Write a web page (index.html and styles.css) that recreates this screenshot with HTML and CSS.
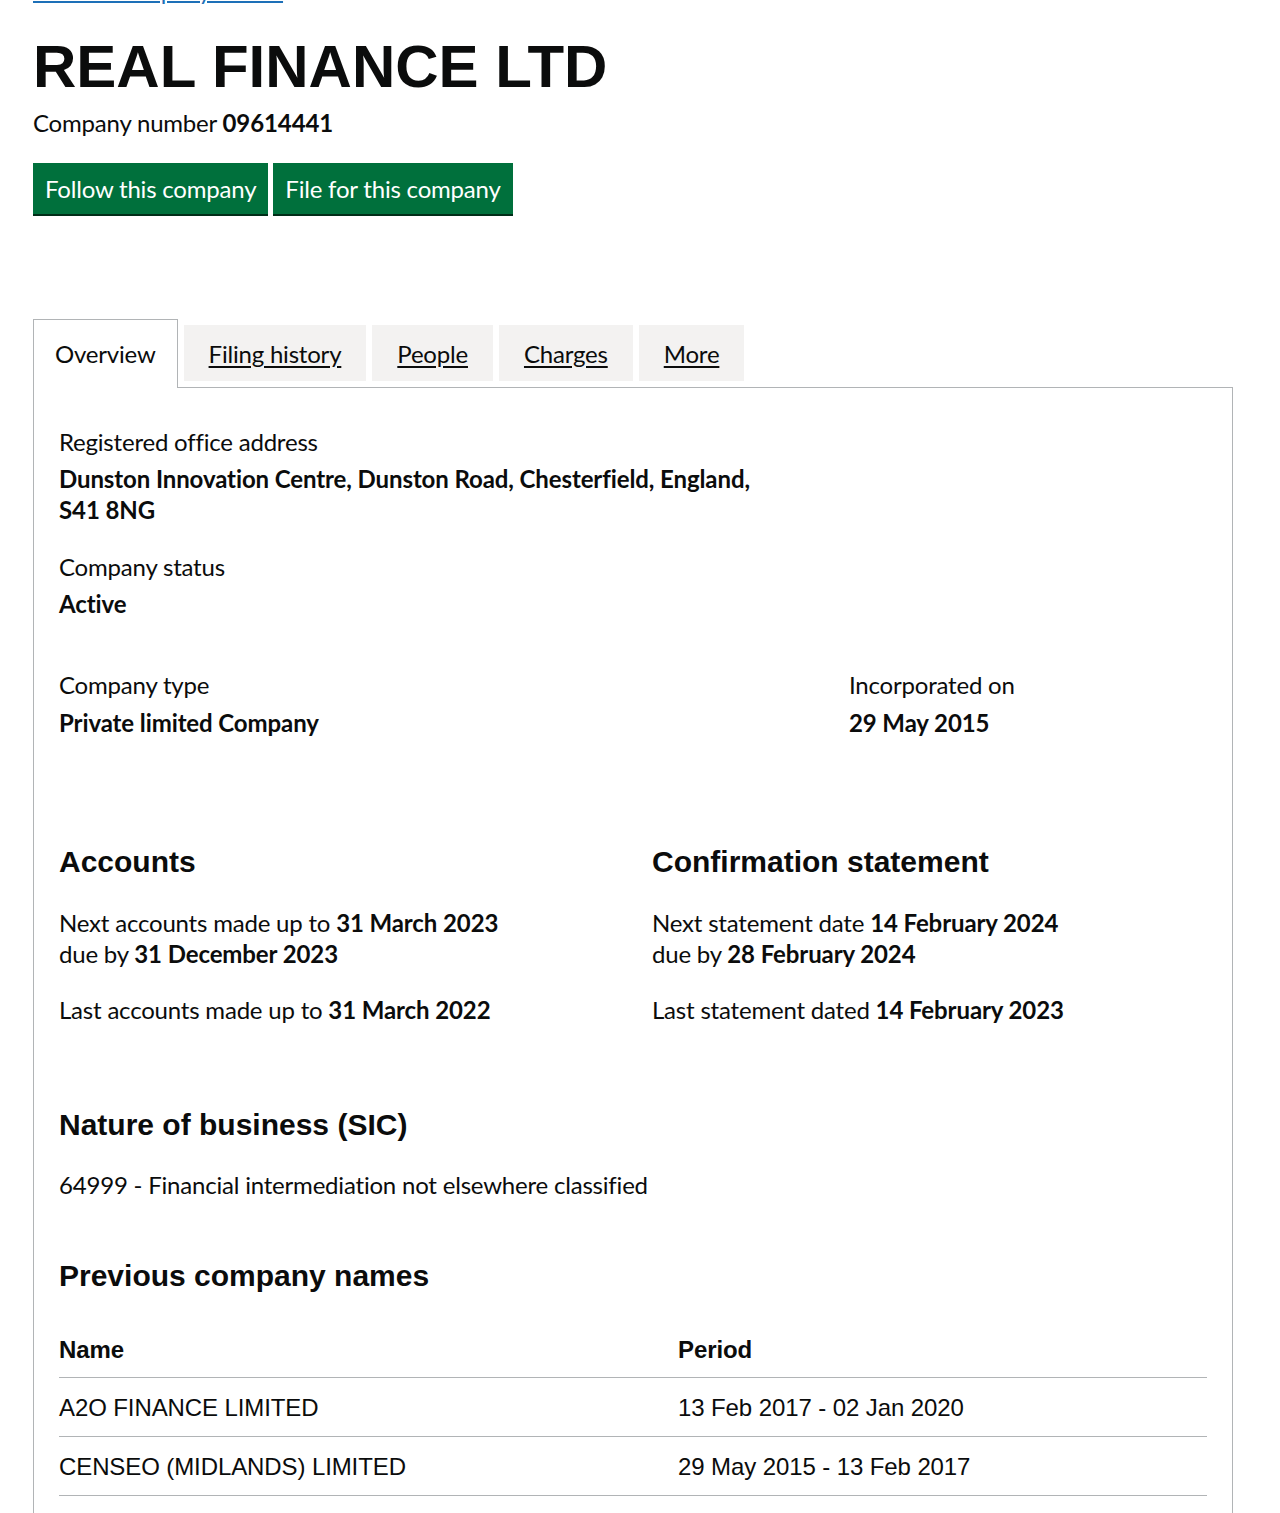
FILE: index.html
```html
<!DOCTYPE html>
<html lang="en">
<head>
<meta charset="utf-8">
<title>REAL FINANCE LTD overview</title>
<link rel="stylesheet" href="styles.css">
</head>
<body>
<main class="page">
  <p class="top-link"><a href="#">Back to company search</a></p>
  <h1 class="title">REAL FINANCE LTD</h1>
  <p class="company-number">Company number <strong>09614441</strong></p>
  <div class="actions">
    <a class="btn" href="#">Follow this company</a>
    <a class="btn" href="#">File for this company</a>
  </div>

  <div class="tabs">
    <ul class="tab-list">
      <li class="tab tab-selected"><span>Overview</span></li>
      <li class="tab"><a href="#">Filing history</a></li>
      <li class="tab"><a href="#">People</a></li>
      <li class="tab"><a href="#">Charges</a></li>
      <li class="tab"><a href="#">More</a></li>
    </ul>
    <section class="panel">
      <div class="row-third">
        <dl class="field">
          <dt>Registered office address</dt>
          <dd>Dunston Innovation Centre, Dunston Road, Chesterfield, England, S41 8NG</dd>
        </dl>
      </div>
      <dl class="field field-status">
        <dt>Company status</dt>
        <dd>Active</dd>
      </dl>
      <div class="row-type">
        <dl class="field">
          <dt>Company type</dt>
          <dd>Private limited Company</dd>
        </dl>
        <dl class="field">
          <dt>Incorporated on</dt>
          <dd>29 May 2015</dd>
        </dl>
      </div>

      <div class="row-half">
        <div>
          <h2 class="heading">Accounts</h2>
          <p class="para">Next accounts made up to <strong>31 March 2023</strong><br>due by <strong>31 December 2023</strong></p>
          <p class="para">Last accounts made up to <strong>31 March 2022</strong></p>
        </div>
        <div>
          <h2 class="heading">Confirmation statement</h2>
          <p class="para">Next statement date <strong>14 February 2024</strong><br>due by <strong>28 February 2024</strong></p>
          <p class="para">Last statement dated <strong>14 February 2023</strong></p>
        </div>
      </div>

      <h2 class="heading heading-sic">Nature of business (SIC)</h2>
      <p class="para">64999 - Financial intermediation not elsewhere classified</p>

      <h2 class="heading heading-prev">Previous company names</h2>
      <table class="names">
        <thead>
          <tr><th class="col-name">Name</th><th>Period</th></tr>
        </thead>
        <tbody>
          <tr><td>A2O FINANCE LIMITED</td><td>13 Feb 2017 - 02 Jan 2020</td></tr>
          <tr><td>CENSEO (MIDLANDS) LIMITED</td><td>29 May 2015 - 13 Feb 2017</td></tr>
        </tbody>
      </table>
    </section>
  </div>
</main>
</body>
</html>
```

FILE: styles.css
```css
* { box-sizing: border-box; }

html, body {
  margin: 0;
  padding: 0;
  background: #ffffff;
}

body {
  font-family: Lato, "Noto Sans", Arial, sans-serif;
  font-size: 24px;
  line-height: 31px;
  letter-spacing: -0.2px;
  color: #0b0c0c;
}

strong {
  letter-spacing: -0.1px;
}

.page {
  width: 1200px;
  margin: 0 0 0 33px;
  padding-bottom: 60px;
}

.top-link {
  margin: -25px 0 0;
}

.top-link a {
  color: #1d70b8;
  text-decoration: underline;
  text-decoration-thickness: 2px;
}

.title {
  font-family: "Liberation Sans", Arial, sans-serif;
  font-weight: 700;
  font-size: 60px;
  line-height: 60px;
  letter-spacing: 0;
  margin: 31px 0 0;
}

.company-number {
  margin: 10px 0 0;
}

.actions {
  display: flex;
  gap: 5px;
  margin-top: 25px;
}

.btn {
  display: inline-block;
  background: #00703c;
  color: #ffffff;
  text-decoration: none;
  padding: 10px 12px;
  line-height: 31px;
  box-shadow: 0 2px 0 #002d18;
}

.tabs {
  margin-top: 105px;
}

.tab-list {
  list-style: none;
  margin: 0;
  padding: 0;
  display: flex;
  align-items: flex-start;
  gap: 6px;
}

.tab {
  margin-top: 6px;
  padding: 12.5px 25px;
  background: #f3f2f1;
}

.tab a {
  color: #0b0c0c;
  text-decoration: underline;
  text-underline-offset: 3px;
}

.tab-selected {
  margin-top: 0;
  margin-bottom: -1px;
  padding: 18px 21px 19px;
  background: #ffffff;
  border: 1px solid #b1b4b6;
  border-bottom: 0;
  position: relative;
  z-index: 1;
}

.panel {
  border: 1px solid #b1b4b6;
  padding: 38px 25px 40px;
}

.field {
  margin: 0;
}

.field dt {
  margin: 0;
}

.field dd {
  margin: 6px 0 0;
  font-weight: 700;
  letter-spacing: -0.1px;
}

.row-third {
  width: 720px;
}

.field-status {
  margin-top: 26px;
}

.row-type {
  display: grid;
  grid-template-columns: 790px 1fr;
  margin-top: 50px;
}

.row-type .field dd {
  margin-top: 7px;
}

.row-half {
  display: grid;
  grid-template-columns: 593px 1fr;
  margin-top: 105px;
}

.heading {
  font-family: "Liberation Sans", Arial, sans-serif;
  font-weight: 700;
  font-size: 30px;
  line-height: 37px;
  letter-spacing: 0;
  margin: 0 0 27px;
}

.para {
  margin: 0 0 25px;
}

.heading-sic {
  margin-top: 56px;
  margin-bottom: 26px;
}

.heading-prev {
  margin-top: 57px;
  margin-bottom: 27px;
}

.names {
  width: 100%;
  border-collapse: collapse;
  font-family: "Liberation Sans", Arial, sans-serif;
  font-size: 24px;
  line-height: 31.5px;
  letter-spacing: -0.1px;
}

.names th,
.names td {
  text-align: left;
  padding: 14px 25px 12.5px 0;
  border-bottom: 1px solid #b1b4b6;
  vertical-align: top;
}

.names th {
  font-weight: 700;
  padding-top: 13px;
  padding-bottom: 11px;
}

.col-name {
  width: 619px;
}
```
